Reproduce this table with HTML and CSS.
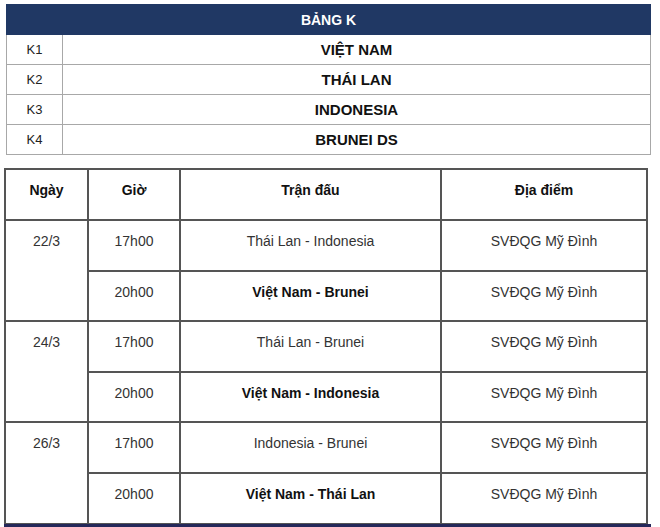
FILE: index.html
```html
<!DOCTYPE html>
<html lang="vi">
<head>
<meta charset="utf-8">
<link rel="stylesheet" href="styles.css">
</head>
<body>
<table class="group">
  <colgroup><col class="g-id"><col class="g-name"></colgroup>
  <tr class="g-head"><th colspan="2">BẢNG K</th></tr>
  <tr><td class="g-code">K1</td><td class="g-team">VIỆT NAM</td></tr>
  <tr><td class="g-code">K2</td><td class="g-team">THÁI LAN</td></tr>
  <tr><td class="g-code">K3</td><td class="g-team">INDONESIA</td></tr>
  <tr><td class="g-code">K4</td><td class="g-team">BRUNEI DS</td></tr>
</table>
<table class="sched">
  <colgroup><col class="c-day"><col class="c-time"><col class="c-match"><col class="c-place"></colgroup>
  <tr class="s-head"><th>Ngày</th><th>Giờ</th><th>Trận đấu</th><th>Địa điểm</th></tr>
  <tr><td rowspan="2">22/3</td><td>17h00</td><td>Thái Lan - Indonesia</td><td>SVĐQG Mỹ Đình</td></tr>
  <tr class="short"><td>20h00</td><td class="b">Việt Nam - Brunei</td><td>SVĐQG Mỹ Đình</td></tr>
  <tr><td rowspan="2">24/3</td><td>17h00</td><td>Thái Lan - Brunei</td><td>SVĐQG Mỹ Đình</td></tr>
  <tr class="short"><td>20h00</td><td class="b">Việt Nam - Indonesia</td><td>SVĐQG Mỹ Đình</td></tr>
  <tr><td rowspan="2">26/3</td><td>17h00</td><td>Indonesia - Brunei</td><td>SVĐQG Mỹ Đình</td></tr>
  <tr><td>20h00</td><td class="b">Việt Nam - Thái Lan</td><td>SVĐQG Mỹ Đình</td></tr>
</table>
<div class="strip"></div>
</body>
</html>
```
FILE: styles.css
```css
html, body {
  margin: 0;
  padding: 0;
  background: #fff;
  font-family: "Liberation Sans", Arial, sans-serif;
  color: #333;
  overflow: hidden;
}
body {
  width: 660px;
  height: 527px;
  position: relative;
}
table {
  border-collapse: collapse;
  table-layout: fixed;
}
.group {
  margin: 4px 0 0 6px;
  width: 645px;
}
.g-id { width: 56px; }
.group th, .group td {
  border: 1px solid #a8a8a8;
  height: 29px;
  padding: 0;
  text-align: center;
  vertical-align: middle;
}
.g-head th {
  background: #203864;
  border-color: #203864;
  color: #fff;
  font-size: 14px;
  font-weight: bold;
}
.g-code {
  font-size: 13px;
  color: #222;
}
.g-team {
  font-size: 15px;
  font-weight: bold;
  color: #111;
}
.sched {
  margin: 13px 0 0 4px;
  width: 644px;
  border: 2px solid #555;
}
.c-day { width: 83px; }
.c-time { width: 92px; }
.c-match { width: 261px; }
.sched th, .sched td {
  border: 2px solid #555;
  height: 51px;
  padding: 12px 0 0 0;
  text-align: center;
  vertical-align: top;
  font-size: 14px;
  line-height: 16px;
  box-sizing: border-box;
}
.sched tr.short td {
  height: 50px;
}
.sched th {
  font-weight: bold;
  color: #111;
}
.sched td.b {
  font-weight: bold;
  color: #111;
}
.strip {
  position: absolute;
  left: 4px;
  right: 9px;
  bottom: 0;
  height: 3px;
  background: #25285a;
}
```
